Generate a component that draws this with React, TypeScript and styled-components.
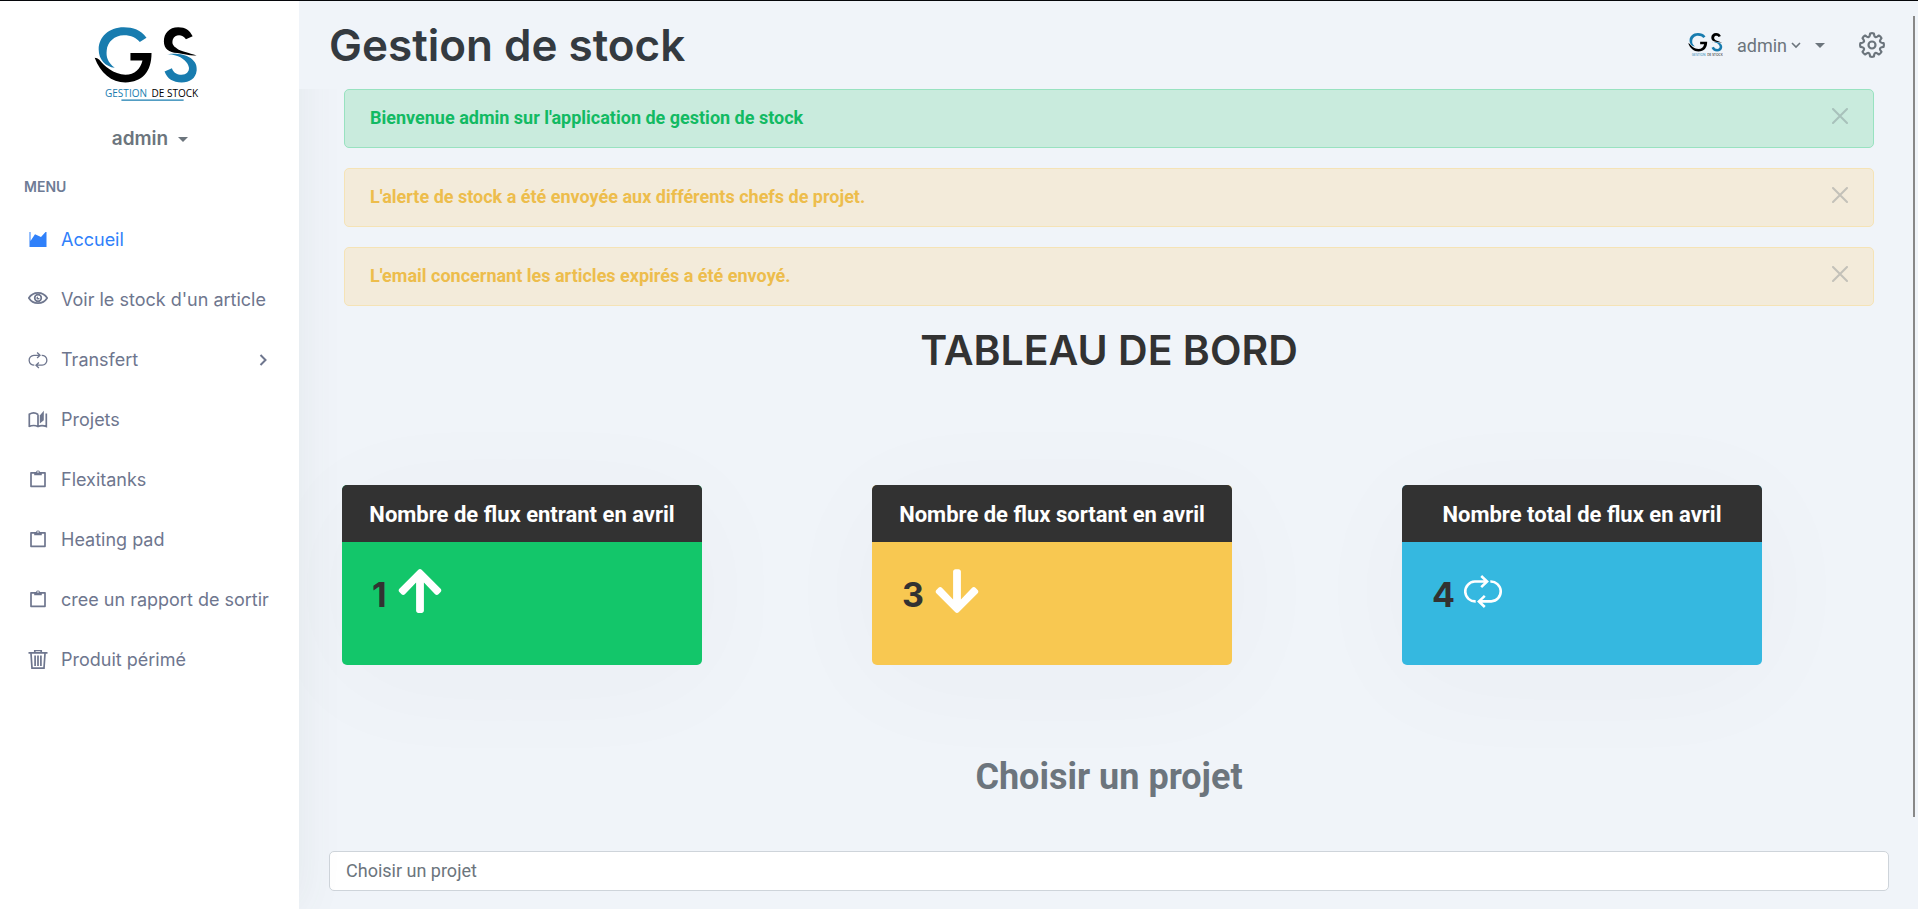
import React from "react";
import styled, { createGlobalStyle } from "styled-components";
import { FaArrowUp, FaArrowDown } from "react-icons/fa";

const roboto = `Roboto, "Liberation Sans", sans-serif`;
const display = `Inter, "Liberation Sans", sans-serif`;

const GlobalStyle = createGlobalStyle`
  *, *::before, *::after { box-sizing: border-box; }
  body {
    margin: 0;
    background: #f0f4f9;
    color: #6c757d;
    font: 18px/27px ${roboto};
  }
  h1, h2, h3, p, ul { margin: 0; padding: 0; }
  a { color: inherit; text-decoration: none; }
  button, select { font: inherit; color: inherit; }
`;

const Shell = styled.div`
  display: flex;
  min-height: 100vh;
  border-top: 1px solid #05060a;
`;

const Sidebar = styled.aside`
  position: relative;
  z-index: 1;
  flex: 0 0 299px;
  min-width: 0;
  background: #fff;
  box-shadow: 0 0 44px rgba(80, 90, 80, 0.08);
`;

const Brand = styled.div`
  display: flex;
  flex-direction: column;
  align-items: center;
  padding: 26px 7px 0 0;
`;

const PlainButton = styled.button`
  display: inline-flex;
  align-items: center;
  border: 0;
  padding: 0;
  background: none;
  cursor: pointer;
`;

const ProfileButton = styled(PlainButton)`
  gap: 10px;
  margin: 25px 0 0 8px;
  font: 600 19px/26px ${display};
`;

const Caret = styled.span`
  border: 5px solid transparent;
  border-top-color: currentColor;
  border-bottom: 0;
`;

const MenuTitle = styled.p`
  padding: 25px 24px 0;
  color: #6e7b95;
  font: 600 14px/20px ${display};
`;

const MenuList = styled.ul`
  padding-top: 13px;
  list-style: none;
`;

const MenuLink = styled.a<{ $active?: boolean }>`
  display: flex;
  align-items: center;
  gap: 13px;
  height: 60px;
  padding: 0 32px 0 28px;
  color: ${(p) => (p.$active ? "#2f80fa" : "#6e768e")};
  font: 400 18px/26px ${display};
  white-space: nowrap;
`;

const MenuText = styled.span`
  flex: 1;
  min-width: 0;
`;

const Main = styled.div`
  flex: 1;
  min-width: 0;
`;

const Topbar = styled.header`
  position: relative;
  z-index: 2;
  display: flex;
  justify-content: space-between;
  align-items: center;
  height: 88px;
  padding: 0 33px 0 30px;
  background: #f0f4f9;
`;

const PageName = styled.h1`
  color: #343a40;
  font: 600 44px/50px ${display};
`;

const TopActions = styled.div`
  display: flex;
  align-items: center;
  gap: 34px;
`;

const UserButton = styled(PlainButton)`
  gap: 14px;
`;

const UserName = styled.span`
  display: flex;
  align-items: center;
  gap: 4px;
`;

const Content = styled.main`
  padding: 0 29px 16px 30px;
`;

const Alerts = styled.div`
  display: grid;
  gap: 20px;
  padding: 0 15px;
`;

const tones = {
  success: { text: "#12ba63", fill: "#c9ebdd", line: "#98e2c0" },
  warning: { text: "#edbd4c", fill: "#f3ebda", line: "#f5e3b6" },
};

const Alert = styled.div<{ $tone: keyof typeof tones }>`
  display: flex;
  justify-content: space-between;
  align-items: center;
  height: 59px;
  padding: 0 25px 2px;
  border: 1px solid ${(p) => tones[p.$tone].line};
  border-radius: 5px;
  background: ${(p) => tones[p.$tone].fill};
  color: ${(p) => tones[p.$tone].text};
  font-weight: 700;
`;

const CloseButton = styled(PlainButton)`
  padding-bottom: 3px;
  color: #6c757d;
  opacity: 0.35;
`;

const BoardTitle = styled.h2`
  padding: 19px 0;
  color: #323232;
  text-align: center;
  font: 600 41px/50px ${display};
`;

const CardGrid = styled.section`
  display: grid;
  grid-template-columns: repeat(3, 1fr);
  align-items: start;
  margin: 91px -15px 0;
`;

const Card = styled.article<{ $color: string }>`
  width: 360px;
  max-width: 90%;
  height: 180px;
  margin-left: 28px;
  overflow: hidden;
  border-radius: 5px;
  background: ${(p) => p.$color};
  box-shadow: 0 15px 120px rgba(56, 65, 74, 0.03);
`;

const CardHeader = styled.h3`
  padding: 16px 0 14px;
  background: #323232;
  color: #fff;
  text-align: center;
  font: 700 22px/27px ${roboto};
`;

const CardBody = styled.div`
  display: flex;
  align-items: center;
  gap: 8px;
  min-height: 98px;
  padding: 0 30px;
  color: #fff;
`;

const Figure = styled.span`
  padding-top: 8px;
  color: #323232;
  font: 700 34px/40px ${display};
`;

const ProjectLabel = styled.label`
  display: block;
  margin: 87px 0 48px;
  text-align: center;
  font: 700 36px/51px ${roboto};
`;

const ProjectSelect = styled.select`
  display: block;
  width: 100%;
  height: 40px;
  padding: 0 16px 2px;
  border: 1px solid #ced4da;
  border-radius: 5px;
  background: #fff;
  appearance: none;
`;

const ScrollThumb = styled.div`
  position: fixed;
  z-index: 3;
  top: 16px;
  right: 3px;
  bottom: 92px;
  width: 2px;
  background: #888;
`;

const Logo = ({ width }: { width: number }) => (
  <svg width={width} height={(width * 222) / 314} viewBox="26 35 314 222" role="img" aria-label="Gestion de stock">
    <path fill="#187caf" d="M183 67C166 44 143 36 115 36 70 36 40 65 40 102c0 30 20 51 48 55-22-17-26-34-24-52 2-25 24-45 51-45 23 0 37 8 48 20z" />
    <path fill="#000" d="M28 127c17 45 50 74 92 74 50-1 78-31 78-88h-63v22h36c-6 26-23 42-51 43-35-1-65-28-78-45-4-4-9-6-14-6z" />
    <path fill="#000" d="M321 63c-9-18-21-27-43-27-28 0-43 19-43 42 0 22 15 32 40 35 20 3 40 9 58 7-23-8-48-12-58-20-13-8-17-15-13-28 6-15 28-17 39 0z" />
    <path fill="#187caf" d="M242 117c18-5 58-2 73 11 15 12 19 22 18 37-3 25-21 35-45 36-26-1-43-11-51-33l22-10c5 14 16 20 29 20 14 0 23-10 22-21-2-17-20-32-40-37-10-3-20-4-28-3z" />
    <text y="243" fontFamily="'Open Sans', sans-serif" fontSize="30">
      <tspan x="59" fill="#187caf">GESTION</tspan>
      <tspan x="198" fill="#000">DE STOCK</tspan>
    </text>
    <path d="M108 253.500h186" stroke="#187caf" strokeWidth="3.500" />
  </svg>
);

const Svg = ({ children }: { children: React.ReactNode }) => (
  <svg width="20" height="20" viewBox="0 0 20 20" fill="none" stroke="currentColor" strokeWidth="1.700" aria-hidden="true">
    {children}
  </svg>
);

const AreaIcon = () => (
  <Svg><path fill="currentColor" stroke="none" d="M1.500 2h1v9L7 4.300l6 2.700 4.500-5h1v15h-17z" /></Svg>
);
const EyeIcon = () => (
  <Svg>
    <path d="M.8 8C3 4.500 6.300 2.900 10 2.900S17 4.500 19.200 8C17 11.500 13.700 13.100 10 13.100S3 11.500.8 8z" />
    <circle cx="10" cy="8" r="3.300" />
    <path d="M10 6.400A1.600 1.600 0 1 0 11.600 8H10z" fill="currentColor" stroke="none" />
  </Svg>
);
const BookIcon = () => (
  <Svg>
    <path d="M10 16V4.500M1.300 17V4.200C4 2.500 7.500 2.600 10 4.500M1 16.500c3-1.200 6.500-1.200 9 0 2.500-1.200 5.500-1.200 8.300 0V3.500" />
    <path d="M11.800 5.500l4-4.800v9.500l-4 3.300z" fill="currentColor" stroke="none" />
  </Svg>
);
const ClipboardIcon = () => (
  <Svg>
    <path d="M3 2.800h14v13.500H3z" strokeLinejoin="round" />
    <path d="M6.200 2H8a2.100 2.100 0 0 1 4 0h1.800v3.200H6.200z" fill="currentColor" stroke="none" />
    <circle cx="10" cy="2" r=".8" fill="#fff" stroke="none" />
  </Svg>
);
const TrashIcon = () => (
  <Svg>
    <path d="M.5 2.900h19M6.800 2.500V.5h6.400v2M3 3.500l1 14.600h12l1-14.600M7.100 5.500v10.500M10 5.500v10.500M12.900 5.500v10.500" />
  </Svg>
);
const LoopIcon = ({ size }: { size: number }) => (
  <svg width={size} height={size} viewBox="246 396 123 120" fill="none" stroke="currentColor" strokeWidth="8" aria-hidden="true">
    <path d="M285 488a30.500 30.500 0 0 1-3-61h37M302 410l18 17-18 17M330 427a30.500 30.500 0 0 1 3 61h-37M313 471l-18 17 18 17" />
  </svg>
);
const ChevronIcon = ({ down }: { down?: boolean }) => (
  <svg width={down ? 10 : 8} height={down ? 8 : 12} viewBox={down ? "0 0 10 8" : "0 0 8 12"} fill="none" stroke="currentColor" strokeWidth={down ? 1.6 : 2} aria-hidden="true">
    <path d={down ? "M1 2l4 4 4-4" : "M1.500 1l5 5-5 5"} />
  </svg>
);
const CloseIcon = () => (
  <svg width="16" height="16" viewBox="0 0 16 16" stroke="currentColor" strokeWidth="2" strokeLinecap="round" aria-hidden="true">
    <path d="M1 1l14 14M15 1L1 15" />
  </svg>
);

const toothPath = (() => {
  const point = (radius: number, degrees: number) => {
    const angle = (degrees * Math.PI) / 180;
    return `${(13 + radius * Math.cos(angle)).toFixed(2)} ${(13 + radius * Math.sin(angle)).toFixed(2)}`;
  };
  let path = "";
  for (let i = 0; i < 8; i += 1) {
    const a = i * 45;
    path += `${i ? "L" : "M"}${point(11.7, a - 9)}Q${point(12.2, a)} ${point(11.7, a + 9)}L${point(9.9, a + 13)}Q${point(7.7, a + 22.5)} ${point(9.9, a + 32)}`;
  }
  return `${path}Z`;
})();

const GearIcon = () => (
  <svg width="26" height="26" viewBox="0 0 26 26" fill="none" stroke="currentColor" strokeWidth="2.200" strokeLinejoin="round" aria-hidden="true">
    <path d={toothPath} />
    <circle cx="13" cy="13" r="3.500" />
  </svg>
);

const menu = [
  { label: "Accueil", icon: <AreaIcon />, active: true },
  { label: "Voir le stock d'un article", icon: <EyeIcon /> },
  { label: "Transfert", icon: <LoopIcon size={20} />, nested: true },
  { label: "Projets", icon: <BookIcon /> },
  { label: "Flexitanks", icon: <ClipboardIcon /> },
  { label: "Heating pad", icon: <ClipboardIcon /> },
  { label: "cree un rapport de sortir", icon: <ClipboardIcon /> },
  { label: "Produit périmé", icon: <TrashIcon /> },
];

const alerts: { tone: keyof typeof tones; text: string }[] = [
  { tone: "success", text: "Bienvenue admin sur l'application de gestion de stock" },
  { tone: "warning", text: "L'alerte de stock a été envoyée aux différents chefs de projet." },
  { tone: "warning", text: "L'email concernant les articles expirés a été envoyé." },
];

const cards = [
  { title: "Nombre de flux entrant en avril", value: 1, color: "#13c66a", icon: <FaArrowUp size={50} /> },
  { title: "Nombre de flux sortant en avril", value: 3, color: "#f8c851", icon: <FaArrowDown size={50} /> },
  { title: "Nombre total de flux en avril", value: 4, color: "#35b8e0", icon: <LoopIcon size={40} /> },
];

export default function App() {
  return (
    <>
      <GlobalStyle />
      <Shell>
        <Sidebar>
          <Brand>
            <Logo width={105} />
            <ProfileButton type="button">admin <Caret /></ProfileButton>
          </Brand>
          <MenuTitle>MENU</MenuTitle>
          <nav aria-label="Menu">
            <MenuList>
              {menu.map((item) => (
                <li key={item.label}>
                  <MenuLink href="#" $active={item.active}>
                    {item.icon}
                    <MenuText>{item.label}</MenuText>
                    {item.nested && <ChevronIcon />}
                  </MenuLink>
                </li>
              ))}
            </MenuList>
          </nav>
        </Sidebar>
        <Main>
          <Topbar>
            <PageName>Gestion de stock</PageName>
            <TopActions>
              <UserButton type="button">
                <Logo width={35} />
                <UserName>admin <ChevronIcon down /></UserName>
                <Caret />
              </UserButton>
              <PlainButton type="button" aria-label="Paramètres"><GearIcon /></PlainButton>
            </TopActions>
          </Topbar>
          <Content>
            <Alerts>
              {alerts.map((alert) => (
                <Alert key={alert.text} $tone={alert.tone} role="alert">
                  {alert.text}
                  <CloseButton type="button" aria-label="Fermer"><CloseIcon /></CloseButton>
                </Alert>
              ))}
            </Alerts>
            <BoardTitle>TABLEAU DE BORD</BoardTitle>
            <CardGrid>
              {cards.map((card) => (
                <Card key={card.title} $color={card.color}>
                  <CardHeader>{card.title}</CardHeader>
                  <CardBody>
                    <Figure>{card.value}</Figure>
                    {card.icon}
                  </CardBody>
                </Card>
              ))}
            </CardGrid>
            <ProjectLabel htmlFor="project">Choisir un projet</ProjectLabel>
            <ProjectSelect id="project" defaultValue="">
              <option value="">Choisir un projet</option>
            </ProjectSelect>
          </Content>
        </Main>
      </Shell>
      <ScrollThumb />
    </>
  );
}
